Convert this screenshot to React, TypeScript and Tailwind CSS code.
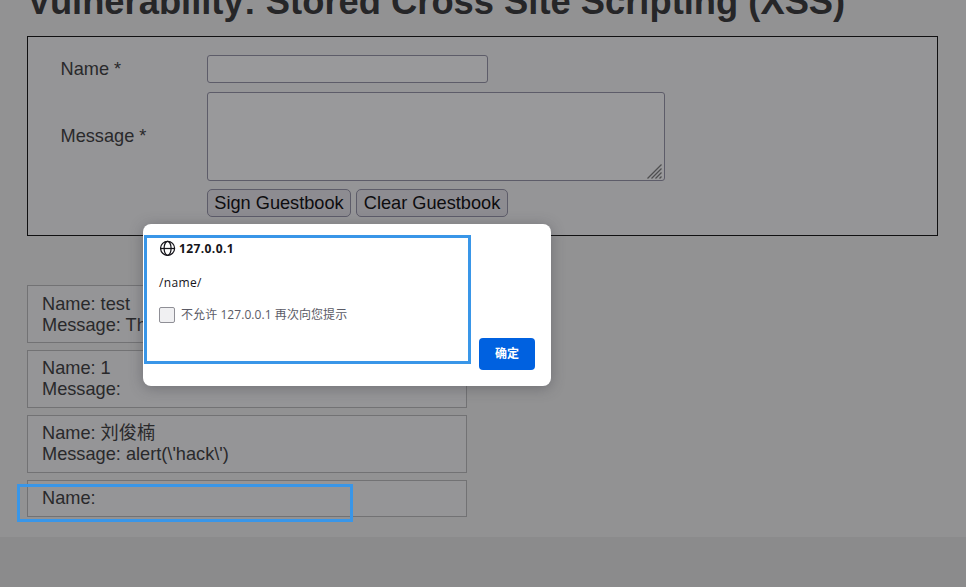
import type { ReactNode } from "react";

function Entry({ children, size = "h-[58px] pt-[7px]" }: { children: ReactNode; size?: string }) {
  return (
    <div className={`w-[440px] border border-[#727274] bg-[#959597] pl-[14px] whitespace-nowrap ${size}`}>
      {children}
    </div>
  );
}

function GuestbookForm() {
  return (
    <section className="mt-[13px] h-[200px] w-[911px] border border-[#101011] bg-[#959597] pl-[32.5px] pt-[18px]">
      <div className="flex h-7 items-center">
        <label htmlFor="name" className="w-[146.5px]">Name *</label>
        <input id="name" className="h-7 w-[281px] rounded-[3px] border border-[#5d5c69] bg-[#99999b] px-1 outline-none" />
      </div>
      <div className="mt-[9px] flex h-[89px] items-center">
        <label htmlFor="message" className="w-[146.5px]">Message *</label>
        <div className="flex h-[89px] w-[458px] items-end justify-end rounded-[3px] border border-[#5d5c69] bg-[#99999b]">
          <textarea id="message" className="h-full min-w-0 flex-1 resize-none bg-transparent outline-none" />
          <svg width="17" height="17" viewBox="0 0 17 17" stroke="#4f4f50" strokeWidth="1.3" fill="none">
            <path d="M0.5 15.5 14.5 1.5M4.5 15.5 14.5 5.5M8.5 15.5 14.5 9.5M12.5 15.5 14.5 13.5" />
          </svg>
        </div>
      </div>
      <div className="mt-2 ml-[146.5px] flex gap-[5px] text-[#0d0d0f]">
        <button className="h-7 w-[144px] rounded-[5px] border border-[#5d5c69] bg-[#8d8c91] whitespace-nowrap">Sign Guestbook</button>
        <button className="h-7 w-[152px] rounded-[5px] border border-[#5d5c69] bg-[#8d8c91] whitespace-nowrap">Clear Guestbook</button>
      </div>
    </section>
  );
}

function AlertDialog() {
  return (
    <div
      role="alertdialog"
      className="absolute left-[143px] top-[224px] h-[162px] w-[408px] rounded-lg bg-white px-4 pt-4 font-['Open_Sans','Noto_Sans_CJK_SC',sans-serif] text-[12px] leading-4 text-[#15141a] shadow-[0_2px_14px_rgba(58,57,68,0.4)]"
    >
      <div className="flex h-4 items-center gap-[3px] font-bold">
        <svg width="16" height="16" viewBox="0 0 16 16" fill="none" stroke="#15141a" strokeWidth="1.25" className="ml-px">
          <circle cx="7.6" cy="8.3" r="7" />
          <ellipse cx="7.6" cy="8.3" rx="3.5" ry="7" />
          <path d="M0.6 8.5h14" />
        </svg>
        <span className="pt-[2px] tracking-[0.4px]">127.0.0.1</span>
      </div>
      <p className="mt-[19px] tracking-[0.35px]">/name/</p>
      <div className="mt-4 flex h-4 items-center gap-[6px] text-[#5b5b66]">
        <span className="size-4 rounded-[2px] border border-[#8f8f96] bg-[#f0f0f2]" />
        <span className="tracking-[0.07px] whitespace-nowrap">不允许 127.0.0.1 再次向您提示</span>
      </div>
      <div className="mt-[15px] flex justify-end">
        <button className="h-8 w-14 rounded bg-[#0061e0] font-bold text-white">确定</button>
      </div>
    </div>
  );
}

export default function App() {
  return (
    <div className="relative h-[587px] w-[966px] overflow-hidden bg-[#8b8b8c] font-['Liberation_Sans','Noto_Sans_CJK_SC',sans-serif] text-[18.2px] leading-[21px] text-[#29292b]">
      <main className="h-[537px] bg-[#929293] pl-[27px]">
        <div className="flex h-[23px] items-end">
          <h1 className="text-[36.35px] leading-[42px] font-bold whitespace-nowrap text-[#262628]">
            Vulnerability: Stored Cross Site Scripting (XSS)
          </h1>
        </div>
        <GuestbookForm />
        <div className="mt-[49px] flex flex-col gap-[7px]">
          <Entry size="h-[58px] pt-[8px]">Name: test<br />Message: This is a test comment.</Entry>
          <Entry>Name: 1<br />Message:</Entry>
          <Entry>Name: 刘俊楠<br />Message: alert(\'hack\')</Entry>
          <Entry size="h-[37px] pt-[7px]">Name:</Entry>
        </div>
      </main>
      <AlertDialog />
      <div className="absolute left-[144px] top-[235px] h-[129px] w-[327px] border-3 border-[#3996e8]" />
      <div className="absolute left-[17px] top-[484px] h-[38px] w-[336px] border-3 border-[#3996e8]" />
    </div>
  );
}
